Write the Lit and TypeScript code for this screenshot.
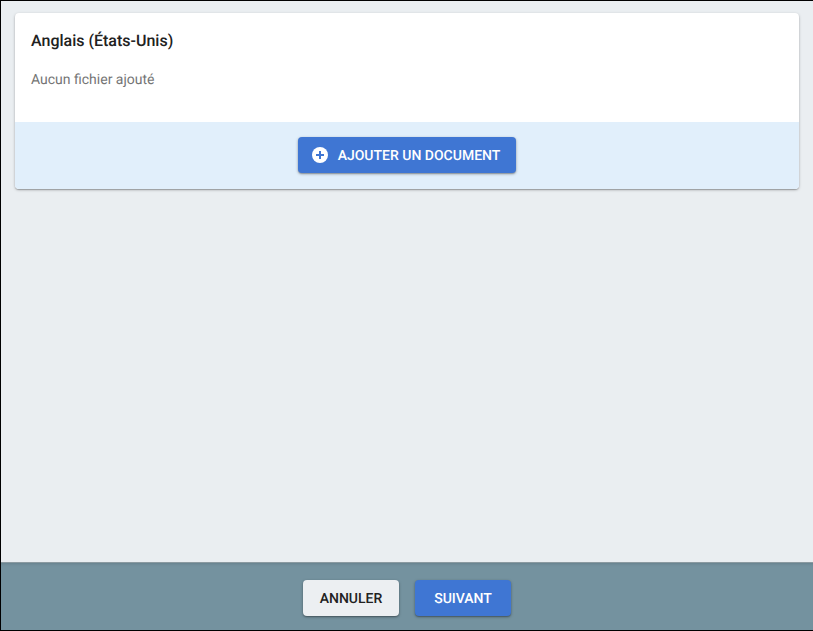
import { LitElement, html, css } from "lit";
import { customElement } from "lit/decorators.js";

@customElement("app-root")
export class AppRoot extends LitElement {
  static styles = css`
    :host {
      display: block;
      width: 813px;
      height: 631px;
      font-family: Roboto, "Liberation Sans", sans-serif;
      text-rendering: geometricPrecision;
    }
    .page {
      box-sizing: border-box;
      width: 813px;
      height: 631px;
      border: solid #000;
      border-width: 1px 0 1px 1px;
      background: #eaeef1;
      display: flex;
      flex-direction: column;
    }
    .main {
      flex: 1;
      padding: 12px 14px 0;
    }
    .card {
      border-radius: 4px;
      overflow: hidden;
      background: #fff;
      box-shadow: 0 1px 3px rgba(0, 0, 0, 0.25), 0 1px 1px rgba(0, 0, 0, 0.2);
    }
    .info {
      box-sizing: border-box;
      height: 109px;
      padding: 18px 16px 0;
    }
    .title {
      font-size: 16px;
      line-height: 20px;
      font-weight: 500;
      color: #212121;
    }
    .sub {
      margin-top: 19px;
      font-size: 14px;
      line-height: 20px;
      color: #757575;
    }
    .actions {
      height: 67px;
      background: #e1effb;
      display: flex;
      justify-content: center;
      padding-top: 15px;
      box-sizing: border-box;
    }
    button {
      box-sizing: border-box;
      font-family: inherit;
      font-size: 14px;
      font-weight: 500;
      text-rendering: inherit;
      height: 36px;
      border: none;
      border-radius: 4px;
      padding: 2px 0 0;
      box-shadow: 0 1px 3px rgba(0, 0, 0, 0.35), 0 1px 1px rgba(0, 0, 0, 0.15);
      display: flex;
      align-items: center;
      justify-content: center;
    }
    .primary {
      background: #3f76d3;
      color: #fff;
    }
    .add {
      width: 218px;
      gap: 10px;
      padding-right: 2px;
    }
    .add svg {
      display: block;
      margin-top: -2px;
    }
    .footer {
      height: 68px;
      box-sizing: border-box;
      background: #74929f;
      border-top: 1px solid #8b9aa1;
      box-shadow: inset 0 3px 3px -2px rgba(0, 0, 0, 0.12);
      display: flex;
      justify-content: center;
      gap: 16px;
      padding: 17px 0 0 0;
    }
    .footer button {
      width: 96px;
    }
    .cancel {
      background: #eceff2;
      color: #212121;
    }
  `;

  render() {
    return html`
      <div class="page">
        <div class="main">
          <div class="card">
            <div class="info">
              <div class="title">Anglais (États-Unis)</div>
              <div class="sub">Aucun fichier ajouté</div>
            </div>
            <div class="actions">
              <button class="primary add">
                <svg width="16" height="16" viewBox="0 0 16 16">
                  <circle cx="8" cy="8" r="8" fill="#fff"></circle>
                  <path d="M8 4v8M4 8h8" stroke="#3f76d3" stroke-width="2" fill="none"></path>
                </svg>
                AJOUTER UN DOCUMENT
              </button>
            </div>
          </div>
        </div>
        <div class="footer">
          <button class="cancel">ANNULER</button>
          <button class="primary">SUIVANT</button>
        </div>
      </div>
    `;
  }
}
